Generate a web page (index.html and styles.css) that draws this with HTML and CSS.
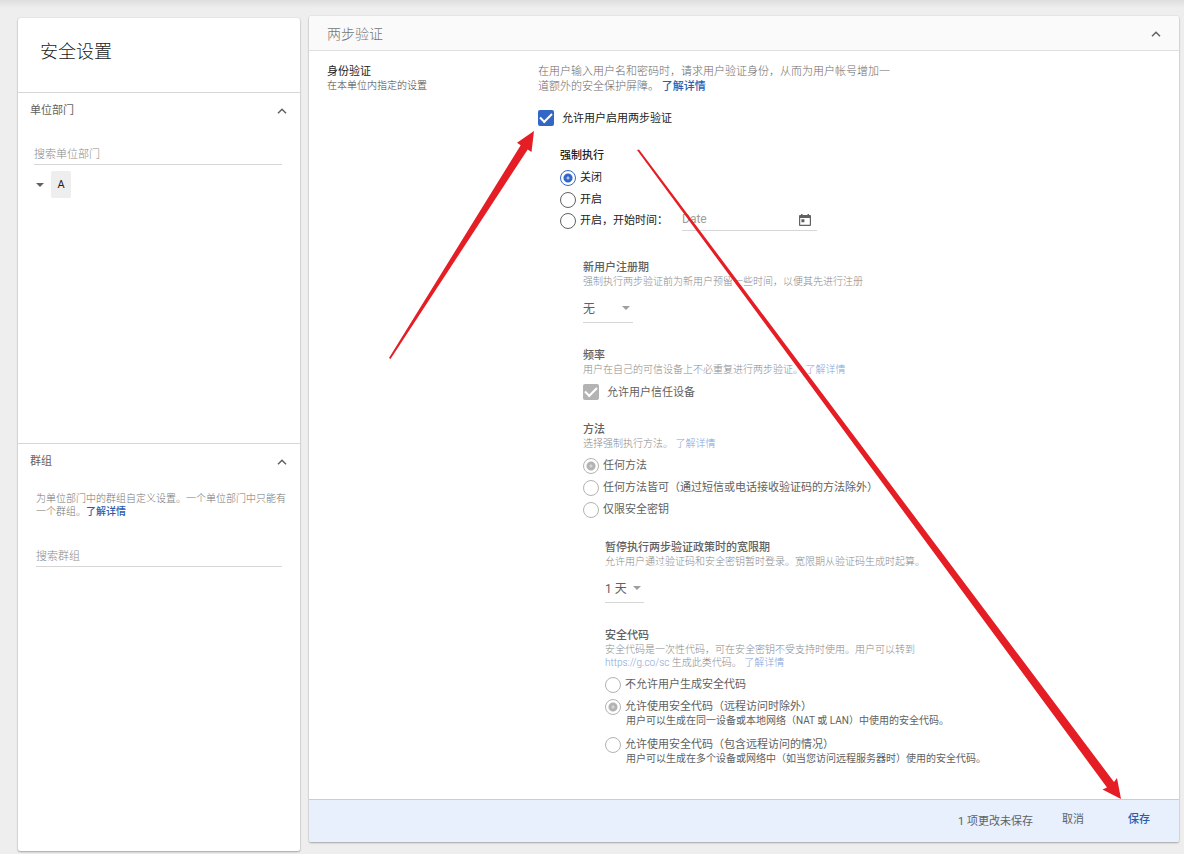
FILE: index.html
```html
<!DOCTYPE html>
<html lang="zh-CN">
<head>
<meta charset="utf-8">
<meta name="viewport" content="width=device-width, initial-scale=1">
<title>安全设置</title>
<link rel="stylesheet" href="styles.css">
</head>
<body>
<div class="page">
  <aside class="card sidebar">
    <h1 class="sidebar-title">安全设置</h1>
    <section class="panel panel-units">
      <div class="panel-head">
        <h2 class="panel-title">单位部门</h2>
        <button class="icon-button" type="button" aria-label="收起单位部门">
          <svg class="chevron" viewBox="0 0 10 6"><path d="M1 5.2 5 1.2 9 5.2"/></svg>
        </button>
      </div>
      <input class="search search-units" type="text" placeholder="搜索单位部门" aria-label="搜索单位部门">
      <div class="tree">
        <button class="icon-button" type="button" aria-label="展开">
          <svg class="caret" viewBox="0 0 8 4"><path d="M0 0h8L4 4z"/></svg>
        </button>
        <button class="tree-node" type="button">A</button>
      </div>
    </section>
    <section class="panel panel-groups">
      <div class="panel-head">
        <h2 class="panel-title">群组</h2>
        <button class="icon-button" type="button" aria-label="收起群组">
          <svg class="chevron" viewBox="0 0 10 6"><path d="M1 5.2 5 1.2 9 5.2"/></svg>
        </button>
      </div>
      <p class="panel-note">为单位部门中的群组自定义设置。一个单位部门中只能有一个群组。<a class="link medium" href="#">了解详情</a></p>
      <input class="search search-groups" type="text" placeholder="搜索群组" aria-label="搜索群组">
    </section>
  </aside>

  <main class="card content">
    <header class="content-head">
      <h2 class="content-title">两步验证</h2>
      <button class="icon-button" type="button" aria-label="收起两步验证">
        <svg class="chevron" viewBox="0 0 10 6"><path d="M1 5.2 5 1.2 9 5.2"/></svg>
      </button>
    </header>

    <div class="content-body">
      <div class="setting-name">
        <h3 class="setting-title">身份验证</h3>
        <p class="setting-scope">在本单位内指定的设置</p>
      </div>

      <form class="settings">
        <p class="intro">在用户输入用户名和密码时，请求用户验证身份，从而为用户帐号增加一道额外的安全保护屏障。 <a class="link medium" href="#">了解详情</a></p>
        <label class="check-row allow-row"><input class="check" type="checkbox" checked>允许用户启用两步验证</label>

        <div class="enforce">
          <h4 class="group-title">强制执行</h4>
          <div class="options">
            <label class="option"><input class="radio" type="radio" name="enforce" checked>关闭</label>
            <label class="option"><input class="radio" type="radio" name="enforce">开启</label>
            <div class="date-row">
              <label class="option"><input class="radio" type="radio" name="enforce">开启，开始时间：</label>
              <div class="date-field">
                <input class="date-input" type="text" placeholder="Date" aria-label="开始日期">
                <svg class="calendar" viewBox="0 0 12 12"><path fill-rule="evenodd" d="M2 0h1.5v1h5V0H10v1h1q1 0 1 1v9q0 1-1 1H1q-1 0-1-1V2q0-1 1-1h1zM1.2 4v6.8h9.6V4zM2.4 5.2h3v3h-3z"/></svg>
              </div>
            </div>
          </div>

          <div class="muted">
            <section class="group period">
              <h4 class="group-title">新用户注册期</h4>
              <p class="group-note">强制执行两步验证前为新用户预留一些时间，以便其先进行注册</p>
              <div class="select-box">
                <select class="select" aria-label="新用户注册期"><option>无</option></select>
                <svg class="caret select-caret" viewBox="0 0 8 4"><path d="M0 0h8L4 4z"/></svg>
              </div>
            </section>

            <section class="group frequency">
              <h4 class="group-title">频率</h4>
              <p class="group-note">用户在自己的可信设备上不必重复进行两步验证。 <a class="link" href="#">了解详情</a></p>
              <label class="check-row trust-row"><input class="check" type="checkbox" checked disabled>允许用户信任设备</label>
            </section>

            <section class="group methods">
              <h4 class="group-title">方法</h4>
              <p class="group-note">选择强制执行方法。 <a class="link" href="#">了解详情</a></p>
              <div class="options">
                <label class="option"><input class="radio" type="radio" name="method" checked disabled>任何方法</label>
                <label class="option"><input class="radio" type="radio" name="method" disabled>任何方法皆可（通过短信或电话接收验证码的方法除外）</label>
                <label class="option"><input class="radio" type="radio" name="method" disabled>仅限安全密钥</label>
              </div>
            </section>

            <div class="nested">
              <section class="group grace">
                <h4 class="group-title">暂停执行两步验证政策时的宽限期</h4>
                <p class="group-note">允许用户通过验证码和安全密钥暂时登录。宽限期从验证码生成时起算。</p>
                <div class="select-box select-small">
                  <select class="select" aria-label="宽限期"><option>1 天</option></select>
                  <svg class="caret select-caret" viewBox="0 0 8 4"><path d="M0 0h8L4 4z"/></svg>
                </div>
              </section>

              <section class="group codes">
                <h4 class="group-title">安全代码</h4>
                <p class="group-note codes-note">安全代码是一次性代码，可在安全密钥不受支持时使用。用户可以转到 <a class="link nowrap" href="#">https://g.co/sc</a> 生成此类代码。 <a class="link" href="#">了解详情</a></p>
                <div class="options">
                  <label class="option"><input class="radio" type="radio" name="code" disabled>不允许用户生成安全代码</label>
                  <label class="option"><input class="radio" type="radio" name="code" checked disabled><span class="option-text">允许使用安全代码（远程访问时除外）<span class="option-note">用户可以生成在同一设备或本地网络（NAT 或 LAN）中使用的安全代码。</span></span></label>
                  <label class="option option-last"><input class="radio" type="radio" name="code" disabled><span class="option-text">允许使用安全代码（包含远程访问的情况）<span class="option-note">用户可以生成在多个设备或网络中（如当您访问远程服务器时）使用的安全代码。</span></span></label>
                </div>
              </section>
            </div>
          </div>
        </div>
      </form>
    </div>

    <footer class="save-bar">
      <span class="pending">1 项更改未保存</span>
      <button class="text-button" type="button">取消</button>
      <button class="text-button primary" type="button">保存</button>
    </footer>
  </main>

  <svg class="arrows" width="1184" height="854" viewBox="0 0 1184 854" aria-hidden="true">
    <path d="M389 358 520.7 145.3 517 142.7 534 131 531.5 152 527.7 149.5 390.5 359z"/>
    <path d="M637 150 639 149.5 1114 782 1117 778 1121 799 1102.5 789.5 1107 787.5z"/>
  </svg>
</div>
</body>
</html>
```
FILE: styles.css
```css
* {
  box-sizing: border-box;
}

body {
  margin: 0;
  background: #eeeeee;
  color: #212121;
  font-family: Roboto, "Noto Sans CJK SC", sans-serif;
  font-size: 11px;
  line-height: 15px;
}

h1, h2, h3, h4, p {
  margin: 0;
  font-size: inherit;
  font-weight: 400;
}

button, input, select {
  font: inherit;
  color: inherit;
}

.page {
  position: relative;
  display: grid;
  grid-template-columns: 282px minmax(0, 1fr);
  column-gap: 9px;
  align-items: start;
  min-height: 100vh;
  padding: 16px 5px 3px 18px;
  background: linear-gradient(#dedede, #eeeeee 8px);
}

.card {
  background: #ffffff;
  border-radius: 2px;
  box-shadow: 0 1px 2px rgba(0, 0, 0, 0.3), 0 0 1px rgba(0, 0, 0, 0.25);
}

.sidebar {
  align-self: stretch;
  margin-top: 2px;
}

.sidebar-title {
  padding: 21px 22px 27px;
  border-bottom: 1px solid #d6d6d6;
  font-size: 18px;
  line-height: 26px;
  font-weight: 300;
}

.panel-units {
  min-height: 351px;
  border-bottom: 1px solid #d6d6d6;
}

.panel-head {
  display: flex;
  align-items: center;
  justify-content: space-between;
  padding: 10px 13px 10px 12px;
}

.panel-title {
  color: #616161;
}

.icon-button {
  display: flex;
  padding: 0;
  border: 0;
  background: none;
  cursor: pointer;
}

.chevron {
  width: 10px;
  height: 6px;
  fill: none;
  stroke: #616161;
  stroke-width: 1.5;
}

.caret {
  width: 8px;
  height: 4px;
  fill: #616161;
}

.search {
  display: block;
  height: 20px;
  padding: 0;
  border: 0;
  border-bottom: 1px solid #d6d6d6;
  background: none;
  outline: 0;
}

.search::placeholder {
  color: #8a8a8a;
  font-weight: 300;
  opacity: 1;
}

.search-units {
  width: calc(100% - 34px);
  margin: 17px 18px 0 16px;
}

.search-groups {
  width: calc(100% - 36px);
  margin: 29px 18px 0;
}

.tree {
  display: flex;
  align-items: center;
  gap: 7px;
  padding: 6px 18px;
}

.tree-node {
  width: 20px;
  height: 27px;
  padding: 0;
  border: 0;
  border-radius: 2px;
  background: #eeeeee;
}

.panel-note {
  padding: 13px 12px 0 18px;
  color: #757575;
  font-size: 10px;
  line-height: 13px;
  font-weight: 300;
}

.link {
  color: #2a5db0;
  text-decoration: none;
}

.medium {
  font-weight: 500;
}

.nowrap {
  white-space: nowrap;
}

.content-head {
  display: flex;
  align-items: center;
  justify-content: space-between;
  padding: 8px 18px 6px;
  border-bottom: 1px solid #e0e0e0;
  border-radius: 2px 2px 0 0;
  background: #fafafa;
}

.content-title {
  color: #757575;
  font-size: 14px;
  line-height: 20px;
  font-weight: 300;
}

.content-body {
  display: grid;
  grid-template-columns: 211px minmax(0, 1fr);
  padding: 13px 18px 34px;
}

.setting-scope {
  font-size: 10px;
  line-height: 13px;
  color: #424242;
  font-weight: 300;
}

.intro {
  max-width: 361px;
  color: #6b6b6b;
  font-weight: 300;
}

.check-row {
  display: flex;
  align-items: center;
}

.allow-row {
  gap: 8px;
  margin-top: 16px;
}

.trust-row {
  gap: 8px;
  margin-top: 8px;
}

.check {
  appearance: none;
  display: grid;
  place-items: center;
  flex: none;
  width: 16px;
  height: 16px;
  margin: 0;
  border-radius: 2px;
  background: #3367c6;
}

.check::after {
  content: "";
  width: 10px;
  height: 5px;
  margin-bottom: 3px;
  border-left: 2px solid #ffffff;
  border-bottom: 2px solid #ffffff;
  transform: rotate(-45deg);
}

.check:disabled {
  background: #b3b3b3;
}

.enforce {
  padding: 22px 0 0 22px;
}

.group-title {
  font-weight: 500;
}

.enforce > .options {
  margin-top: 4px;
}

.option {
  display: flex;
  align-items: flex-start;
  gap: 4px;
  padding: 3px 0;
  line-height: 16px;
}

.radio {
  appearance: none;
  flex: none;
  width: 16px;
  height: 16px;
  margin: 0;
  border: 1px solid #616161;
  border-radius: 50%;
}

.radio:checked {
  border-color: #3367c6;
  background: radial-gradient(circle, #a8c0ea 1px, #3367c6 2px 4px, transparent 5px);
}

.radio:disabled {
  border-color: #b3b3b3;
}

.radio:checked:disabled {
  border-color: #b3b3b3;
  background: radial-gradient(circle, #d6d6d6 1px, #b3b3b3 2px 4px, transparent 5px);
}

.date-row {
  display: flex;
  align-items: flex-start;
  gap: 14px;
  height: 20px;
}

.date-row .option {
  padding: 2px 0;
}

.date-field {
  display: flex;
  align-items: center;
  width: 135px;
  height: 20px;
  padding: 0 6px 2px 0;
  border-bottom: 1px solid #d6d6d6;
}

.date-input {
  flex: 1;
  min-width: 0;
  padding: 0;
  border: 0;
  background: none;
  outline: 0;
  font-size: 12px;
}

.date-input::placeholder {
  color: #9e9e9e;
  opacity: 1;
}

.calendar {
  width: 12px;
  height: 12px;
  fill: #616161;
}

.muted {
  padding: 29px 0 0 23px;
  color: #616161;
}

.group-note {
  color: #8a8a8a;
  font-size: 10px;
  line-height: 13px;
  font-weight: 300;
}

.muted .link {
  color: #86a5d8;
}

.select-box {
  position: relative;
  width: 50px;
  height: 25px;
  margin-top: 10px;
  border-bottom: 1px solid #d6d6d6;
}

.select {
  appearance: none;
  width: 100%;
  height: 22px;
  padding: 0;
  border: 0;
  background: none;
  font-size: 12px;
}

.select-caret {
  position: absolute;
  top: 8px;
  right: 3px;
  fill: #9e9e9e;
  pointer-events: none;
}

.select-small {
  width: 39px;
}

.frequency {
  margin-top: 25px;
}

.methods {
  margin-top: 22px;
}

.group .options {
  margin-top: 5px;
}

.nested {
  padding: 19px 0 0 22px;
}

.codes {
  margin-top: 25px;
}

.codes-note {
  max-width: 320px;
}

.option-text {
  line-height: 15px;
}

.option-note {
  display: block;
  padding-left: 1px;
  font-size: 10px;
  line-height: 13px;
}

.option-last {
  margin-top: 4px;
  padding-bottom: 0;
}

.save-bar {
  display: flex;
  align-items: flex-start;
  justify-content: flex-end;
  padding: 10px 18px;
  border-top: 1px solid #c6cedb;
  border-radius: 0 0 2px 2px;
  background: #e8f0fe;
  color: #616161;
}

.pending {
  margin-right: 18px;
  padding: 4px 0 3px;
}

.text-button {
  padding: 2px 11px;
  border: 0;
  background: none;
  line-height: 15px;
  cursor: pointer;
}

.primary {
  margin-left: 22px;
  color: #2a5db0;
  font-weight: 500;
}

.arrows {
  position: absolute;
  top: 0;
  left: 0;
  fill: #e51d24;
  pointer-events: none;
}
```
